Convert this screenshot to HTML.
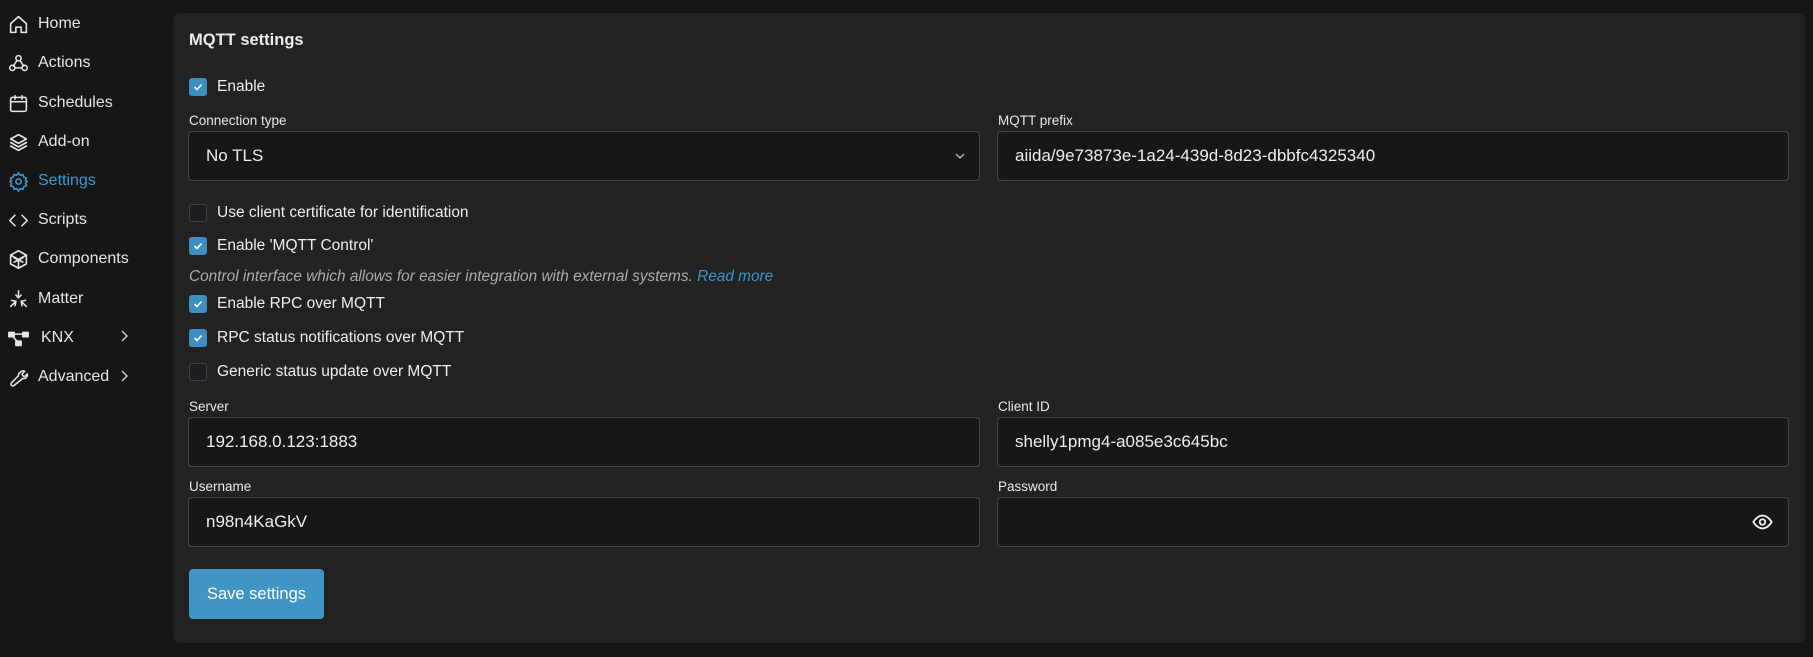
<!DOCTYPE html>
<html><head><meta charset="utf-8"><style>
*{box-sizing:border-box;margin:0;padding:0}
body{width:1813px;height:657px;background:#161616;font-family:"Liberation Sans",sans-serif;color:#ececec;position:relative;overflow:hidden}
.a{position:absolute}
.nav{position:absolute;left:8px;font-size:16px;color:#e6e6e6;display:flex;align-items:center;height:24px}
.nav svg{width:21px;height:21px;margin-right:9px;fill:none;stroke:#e6e6e6;stroke-width:1.8;stroke-linecap:round;stroke-linejoin:round}
.nav.act{color:#3d9ad3}.nav.act svg{stroke:#3d9ad3}
.chev{position:absolute;left:119px}
.panel{position:absolute;left:173px;top:13px;width:1632px;height:630px;background:#222;border-radius:8px}
.lbl{position:absolute;font-size:13.5px;color:#e8e8e8}
.inp{position:absolute;height:50px;background:#171717;border:1px solid #3a4552;border-radius:4px;font-size:17px;color:#eee;padding-left:17px;line-height:48px}
.cb{position:absolute;left:189px;width:18px;height:18px;border-radius:3px;background:#3d8fc2}
.cb.off{background:#1b1d20;border:1.5px solid #3a4047}
.cb svg{position:absolute;left:4px;top:4px}
.cl{position:absolute;left:217px;font-size:15.5px;color:#eee}
</style></head><body>
<div class="nav" style="top:12px"><svg viewBox="0 0 24 24"><path d="M3 11L12 3l9 8v10h-6v-6H9v6H3z"/></svg>Home</div>
<div class="nav" style="top:51px"><svg viewBox="0 0 24 24"><circle cx="12" cy="6" r="3"/><circle cx="5" cy="17" r="3"/><circle cx="19" cy="17" r="3"/><path d="M10 9l-4 6M14 9l4 6M8 17h8"/></svg>Actions</div>
<div class="nav" style="top:91px"><svg viewBox="0 0 24 24"><rect x="3" y="5" width="18" height="16" rx="2"/><path d="M3 10h18M8 3v4M16 3v4"/></svg>Schedules</div>
<div class="nav" style="top:130px"><svg viewBox="0 0 24 24"><path d="M12 3l9 5-9 5-9-5z"/><path d="M3 12l9 5 9-5M3 16l9 5 9-5"/></svg>Add-on</div>
<div class="nav act" style="top:169px"><svg viewBox="0 0 24 24"><circle cx="12" cy="12" r="3"/><path d="M12 2l2 3 3-1 1 3 3 1-1 3 2 1-2 2 1 3-3 1-1 3-3-1-2 3-2-3-3 1-1-3-3-1 1-3-2-2 2-1-1-3 3-1 1-3 3 1z"/></svg>Settings</div>
<div class="nav" style="top:208px"><svg viewBox="0 0 24 24"><path d="M8 6l-6 6 6 6M16 6l6 6-6 6"/></svg>Scripts</div>
<div class="nav" style="top:247px"><svg viewBox="0 0 24 24"><path d="M12 2l9 5v10l-9 5-9-5V7z"/><path d="M3 7l9 5 9-5M12 12v10M7 10l10 5M17 10L7 15"/></svg>Components</div>
<div class="nav" style="top:287px"><svg viewBox="0 0 24 24"><path d="M12 2v8M9 7l3 3 3-3M3 20l6-6M21 20l-6-6M4 13l5 1-1 5M20 13l-5 1 1 5"/></svg>Matter</div>
<div class="nav" style="top:326px"><svg viewBox="0 0 24 24" style="fill:#e6e6e6"><rect x="1" y="5" width="6" height="5"/><rect x="17" y="5" width="6" height="5"/><rect x="9" y="15" width="6" height="5"/><path d="M7 7h10M5 9l6 7"/></svg><span style="margin-left:3px">KNX</span></div>
<svg class="chev" style="top:329px" width="10" height="14" viewBox="0 0 10 14"><path d="M3 2l5 5-5 5" stroke="#ccc" stroke-width="1.5" fill="none"/></svg>
<div class="nav" style="top:365px"><svg viewBox="0 0 24 24"><path d="M14 6a4 4 0 015-1l-3 3 1 2 2 1 3-3a4 4 0 01-5 5L7 21a2 2 0 01-3-3l8-8a4 4 0 012-4z"/></svg>Advanced</div>
<svg class="chev" style="top:369px" width="10" height="14" viewBox="0 0 10 14"><path d="M3 2l5 5-5 5" stroke="#ccc" stroke-width="1.5" fill="none"/></svg>

<div class="panel"></div>
<div class="a" style="left:189px;top:31px;font-size:16.5px;font-weight:bold">MQTT settings</div>

<div class="cb" style="top:78px"><svg width="10" height="10" viewBox="0 0 10 10"><path d="M1.5 5l2.5 2.5 4.5-5" stroke="#fff" stroke-width="1.6" fill="none"/></svg></div>
<div class="cl" style="top:78px">Enable</div>

<div class="lbl" style="left:189px;top:113px">Connection type</div>
<div class="inp" style="left:188px;top:131px;width:792px">No TLS<svg class="a" style="left:765px;top:19px" width="12" height="10" viewBox="0 0 12 10"><path d="M2 3l4 4 4-4" stroke="#bbb" stroke-width="1.3" fill="none"/></svg></div>
<div class="lbl" style="left:998px;top:113px">MQTT prefix</div>
<div class="inp" style="left:997px;top:131px;width:792px">aiida/9e73873e-1a24-439d-8d23-dbbfc4325340</div>

<div class="cb off" style="top:204px"></div>
<div class="cl" style="top:204px">Use client certificate for identification</div>
<div class="cb" style="top:237px"><svg width="10" height="10" viewBox="0 0 10 10"><path d="M1.5 5l2.5 2.5 4.5-5" stroke="#fff" stroke-width="1.6" fill="none"/></svg></div>
<div class="cl" style="top:237px">Enable 'MQTT Control'</div>
<div class="a" style="left:189px;top:268px;font-size:15.4px;font-style:italic;color:#a8abb0">Control interface which allows for easier integration with external systems. <span style="color:#3d95cc">Read more</span></div>
<div class="cb" style="top:295px"><svg width="10" height="10" viewBox="0 0 10 10"><path d="M1.5 5l2.5 2.5 4.5-5" stroke="#fff" stroke-width="1.6" fill="none"/></svg></div>
<div class="cl" style="top:295px">Enable RPC over MQTT</div>
<div class="cb" style="top:329px"><svg width="10" height="10" viewBox="0 0 10 10"><path d="M1.5 5l2.5 2.5 4.5-5" stroke="#fff" stroke-width="1.6" fill="none"/></svg></div>
<div class="cl" style="top:329px">RPC status notifications over MQTT</div>
<div class="cb off" style="top:363px"></div>
<div class="cl" style="top:363px">Generic status update over MQTT</div>

<div class="lbl" style="left:189px;top:399px">Server</div>
<div class="inp" style="left:188px;top:417px;width:792px">192.168.0.123:1883</div>
<div class="lbl" style="left:998px;top:399px">Client ID</div>
<div class="inp" style="left:997px;top:417px;width:792px">shelly1pmg4-a085e3c645bc</div>
<div class="lbl" style="left:189px;top:479px">Username</div>
<div class="inp" style="left:188px;top:497px;width:792px">n98n4KaGkV</div>
<div class="lbl" style="left:998px;top:479px">Password</div>
<div class="inp" style="left:997px;top:497px;width:792px"><svg class="a" style="left:752px;top:13px" width="25" height="22" viewBox="0 0 24 24"><path d="M2 12s4-7 10-7 10 7 10 7-4 7-10 7S2 12 2 12z" stroke="#f0f0f0" stroke-width="2" fill="none"/><circle cx="12" cy="12" r="3" stroke="#f0f0f0" stroke-width="2" fill="none"/></svg></div>

<div class="a" style="left:189px;top:569px;width:135px;height:50px;background:#4195c4;border-radius:4px;color:#fff;font-size:16.5px;line-height:50px;text-align:center">Save settings</div>
</body></html>
